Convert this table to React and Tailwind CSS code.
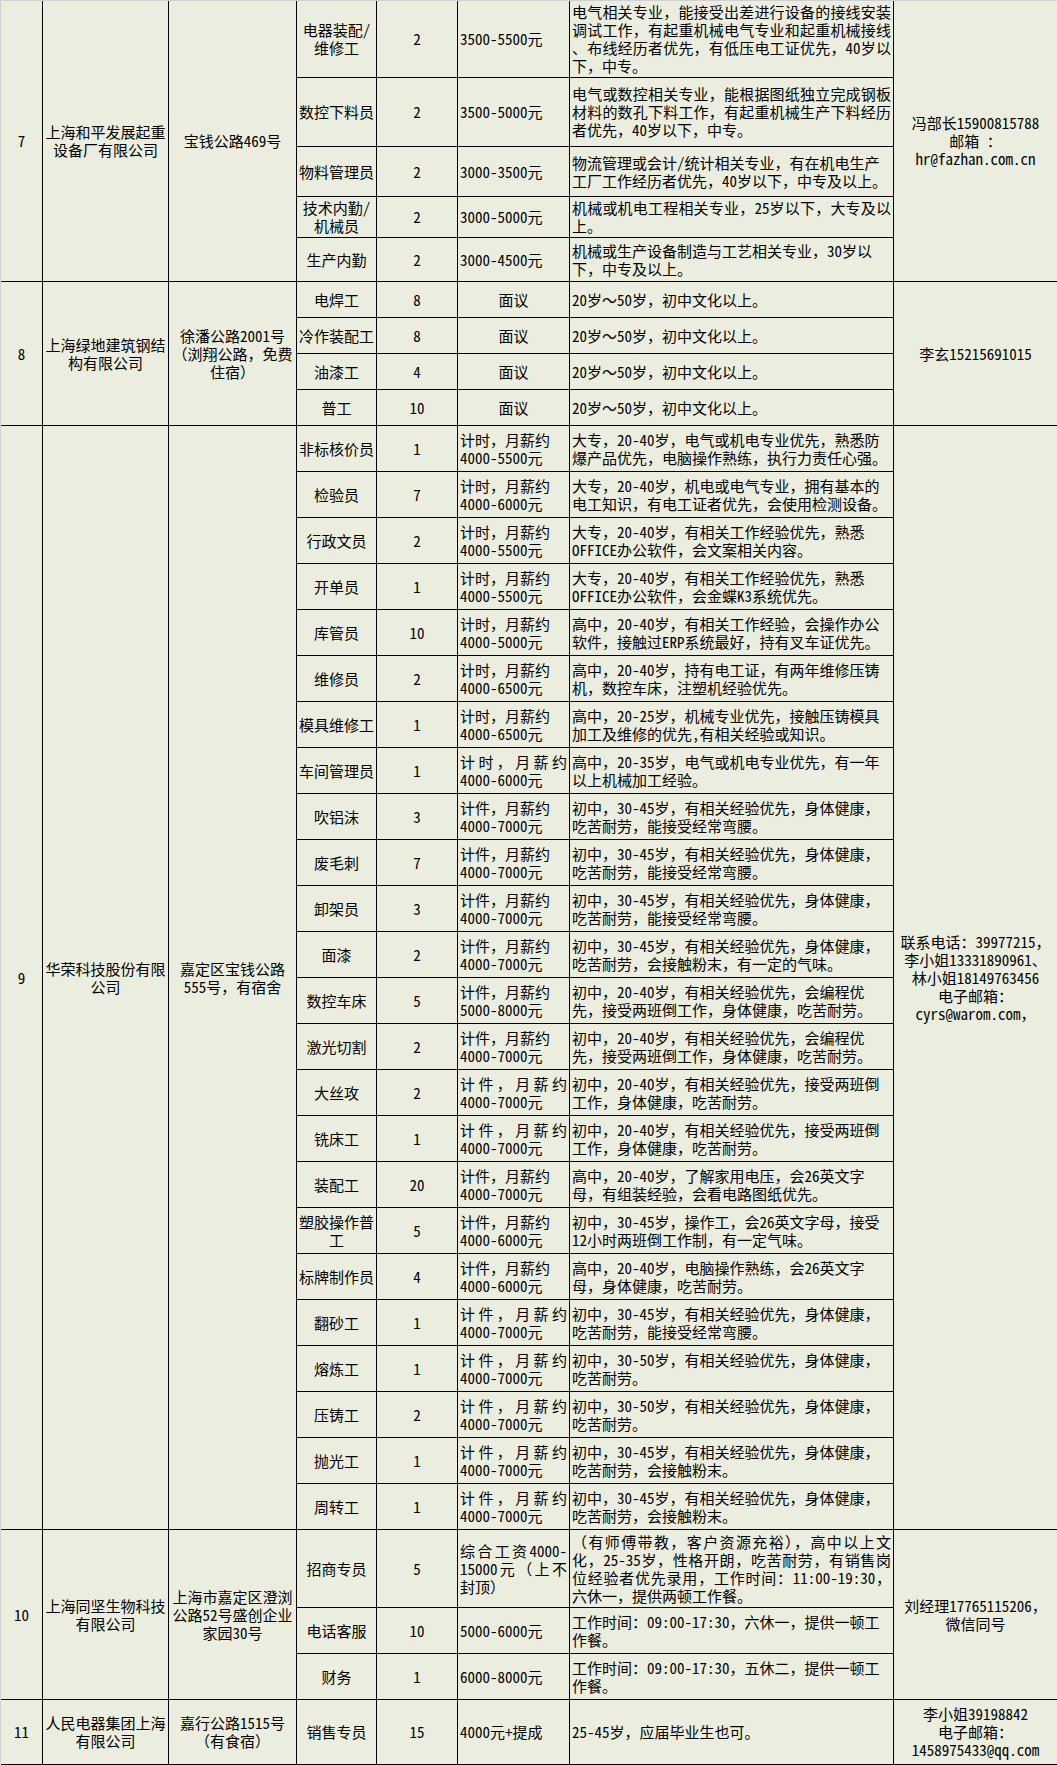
import React from 'react'

const FONT = "font-['Noto_Sans_Mono_CJK_SC','Noto_Sans_CJK_SC',sans-serif]"

const A = (pos, n, pay, req, opts = {}) => ({ pos, n, pay, req, ...opts })

const reqA = ['初中，30-45岁，有相关经验优先，身体健康，', '吃苦耐劳，能接受经常弯腰。']
const reqB = ['初中，20-40岁，有相关经验优先，会编程优', '先，接受两班倒工作，身体健康，吃苦耐劳。']
const reqC = ['初中，20-40岁，有相关经验优先，接受两班倒', '工作，身体健康，吃苦耐劳。']
const reqD = ['初中，30-50岁，有相关经验优先，身体健康，', '吃苦耐劳。']
const reqE = ['初中，30-45岁，有相关经验优先，身体健康，', '吃苦耐劳，会接触粉末。']

const hourly = (amt) => ['计时，月薪约', amt]
const piece = (amt) => ['计件，月薪约', amt]

const groups = [
  {
    no: '7',
    company: ['上海和平发展起重', '设备厂有限公司'],
    address: ['宝钱公路469号'],
    contact: ['冯部长15900815788', '邮箱 ：', 'hr@fazhan.com.cn'],
    jobs: [
      A(['电器装配/', '维修工'], '2', ['3500-5500元'], [
        '电气相关专业，能接受出差进行设备的接线安装',
        '调试工作，有起重机械电气专业和起重机械接线',
        '、布线经历者优先，有低压电工证优先，40岁以',
        '下，中专。',
      ], { h: 'h-[77px]', rj: 3 }),
      A(['数控下料员'], '2', ['3500-5000元'], [
        '电气或数控相关专业，能根据图纸独立完成钢板',
        '材料的数孔下料工作，有起重机械生产下料经历',
        '者优先，40岁以下，中专。',
      ], { h: 'h-[69px]', rj: 2 }),
      A(['物料管理员'], '2', ['3000-3500元'], [
        '物流管理或会计/统计相关专业，有在机电生产',
        '工厂工作经历者优先，40岁以下，中专及以上。',
      ], { h: 'h-[50px]' }),
      A(['技术内勤/', '机械员'], '2', ['3000-5000元'], [
        '机械或机电工程相关专业，25岁以下，大专及以',
        '上。',
      ], { h: 'h-[41px]', rj: 1 }),
      A(['生产内勤'], '2', ['3000-4500元'], [
        '机械或生产设备制造与工艺相关专业，30岁以',
        '下，中专及以上。',
      ], { h: 'h-[44px]' }),
    ],
  },
  {
    no: '8',
    company: ['上海绿地建筑钢结', '构有限公司'],
    address: ['徐潘公路2001号', '（浏翔公路，免费', '住宿）'],
    contact: ['李玄15215691015'],
    jobs: [
      A(['电焊工'], '8', ['面议'], ['20岁～50岁，初中文化以上。'], { h: 'h-[36px]', pc: true }),
      A(['冷作装配工'], '8', ['面议'], ['20岁～50岁，初中文化以上。'], { h: 'h-[36px]', pc: true }),
      A(['油漆工'], '4', ['面议'], ['20岁～50岁，初中文化以上。'], { h: 'h-[36px]', pc: true }),
      A(['普工'], '10', ['面议'], ['20岁～50岁，初中文化以上。'], { h: 'h-[36px]', pc: true }),
    ],
  },
  {
    no: '9',
    company: ['华荣科技股份有限', '公司'],
    address: ['嘉定区宝钱公路', '555号，有宿舍'],
    contact: ['联系电话：39977215，', '李小姐13331890961、', '林小姐18149763456', '电子邮箱：', 'cyrs@warom.com，'],
    jobs: [
      A(['非标核价员'], '1', hourly('4000-5500元'), ['大专，20-40岁，电气或机电专业优先，熟悉防', '爆产品优先，电脑操作熟练，执行力责任心强。']),
      A(['检验员'], '7', hourly('4000-6000元'), ['大专，20-40岁，机电或电气专业，拥有基本的', '电工知识，有电工证者优先，会使用检测设备。']),
      A(['行政文员'], '2', hourly('4000-5500元'), ['大专，20-40岁，有相关工作经验优先，熟悉', 'OFFICE办公软件，会文案相关内容。']),
      A(['开单员'], '1', hourly('4000-5500元'), ['大专，20-40岁，有相关工作经验优先，熟悉', 'OFFICE办公软件，会金蝶K3系统优先。']),
      A(['库管员'], '10', hourly('4000-5000元'), ['高中，20-40岁，有相关工作经验，会操作办公', '软件，接触过ERP系统最好，持有叉车证优先。']),
      A(['维修员'], '2', hourly('4000-6500元'), ['高中，20-40岁，持有电工证，有两年维修压铸', '机，数控车床，注塑机经验优先。']),
      A(['模具维修工'], '1', hourly('4000-6500元'), ['高中，20-25岁，机械专业优先，接触压铸模具', '加工及维修的优先,有相关经验或知识。']),
      A(['车间管理员'], '1', hourly('4000-6000元'), ['高中，20-35岁，电气或机电专业优先，有一年', '以上机械加工经验。'], { pj: 1 }),
      A(['吹铝沫'], '3', piece('4000-7000元'), reqA),
      A(['废毛刺'], '7', piece('4000-7000元'), reqA),
      A(['卸架员'], '3', piece('4000-7000元'), reqA),
      A(['面漆'], '2', piece('4000-7000元'), ['初中，30-45岁，有相关经验优先，身体健康，', '吃苦耐劳，会接触粉末，有一定的气味。']),
      A(['数控车床'], '5', piece('5000-8000元'), reqB),
      A(['激光切割'], '2', piece('4000-7000元'), reqB),
      A(['大丝攻'], '2', piece('4000-7000元'), reqC, { pj: 1 }),
      A(['铣床工'], '1', piece('4000-7000元'), reqC, { pj: 1 }),
      A(['装配工'], '20', piece('4000-7000元'), ['高中，20-40岁，了解家用电压，会26英文字', '母，有组装经验，会看电路图纸优先。']),
      A(['塑胶操作普', '工'], '5', piece('4000-6000元'), ['初中，30-45岁，操作工，会26英文字母，接受', '12小时两班倒工作制，有一定气味。']),
      A(['标牌制作员'], '4', piece('4000-6000元'), ['高中，20-40岁，电脑操作熟练，会26英文字', '母，身体健康，吃苦耐劳。']),
      A(['翻砂工'], '1', piece('4000-7000元'), reqA, { pj: 1 }),
      A(['熔炼工'], '1', piece('4000-7000元'), reqD, { pj: 1 }),
      A(['压铸工'], '2', piece('4000-7000元'), reqD, { pj: 1 }),
      A(['抛光工'], '1', piece('4000-7000元'), reqE, { pj: 1 }),
      A(['周转工'], '1', piece('4000-7000元'), reqE, { pj: 1 }),
    ].map((j) => ({ h: 'h-[46px]', ...j })),
  },
  {
    no: '10',
    company: ['上海同坚生物科技', '有限公司'],
    address: ['上海市嘉定区澄浏', '公路52号盛创企业', '家园30号'],
    contact: ['刘经理17765115206，', '微信同号'],
    jobs: [
      A(['招商专员'], '5', ['综合工资4000-', '15000元（上不', '封顶）'], [
        '（有师傅带教，客户资源充裕），高中以上文',
        '化，25-35岁，性格开朗，吃苦耐劳，有销售岗',
        '位经验者优先录用，工作时间：11:00-19:30，',
        '六休一，提供两顿工作餐。',
      ], { h: 'h-[78px]', pj: 2, rj: 3 }),
      A(['电话客服'], '10', ['5000-6000元'], ['工作时间：09:00-17:30，六休一，提供一顿工', '作餐。'], { h: 'h-[46px]' }),
      A(['财务'], '1', ['6000-8000元'], ['工作时间：09:00-17:30，五休二，提供一顿工', '作餐。'], { h: 'h-[46px]' }),
    ],
  },
  {
    no: '11',
    company: ['人民电器集团上海', '有限公司'],
    address: ['嘉行公路1515号', '（有食宿）'],
    contact: ['李小姐39198842', '电子邮箱：', '1458975433@qq.com'],
    jobs: [
      A(['销售专员'], '15', ['4000元+提成'], ['25-45岁，应届毕业生也可。'], { h: 'h-[65px]' }),
    ],
  },
]

const Lines = ({ lines, j = 0 }) =>
  lines.map((t, i) => (
    <div key={i} className={i < j ? 'whitespace-nowrap [text-align-last:justify]' : 'whitespace-nowrap'}>
      {t}
    </div>
  ))

const Center = ({ className, children }) => (
  <div className={`flex items-center justify-center text-center border-r border-b border-black ${className}`}>
    <div>{children}</div>
  </div>
)

const Left = ({ className, children }) => (
  <div className={`flex items-center px-[2px] border-r border-b border-black ${className}`}>
    <div className="w-full text-left">{children}</div>
  </div>
)

export default function App() {
  return (
    <div className={`w-[1057px] h-[1765px] overflow-hidden bg-[#ebeedf] border-t border-l border-[#d0d0d0] text-black text-[15px] leading-[18px] ${FONT}`}>
      {groups.map((g) => (
        <div key={g.no} className="flex">
          <Center className="w-[42px] shrink-0">{g.no}</Center>
          <Center className="w-[126px] shrink-0">
            <Lines lines={g.company} />
          </Center>
          <Center className="w-[128px] shrink-0">
            <Lines lines={g.address} />
          </Center>
          <div className="flex flex-col w-[597px] shrink-0">
            {g.jobs.map((job, i) => (
              <div key={i} className={`flex ${job.h}`}>
                <Center className="w-[80px] shrink-0">
                  <Lines lines={job.pos} />
                </Center>
                <Center className="w-[81px] shrink-0">{job.n}</Center>
                {job.pc ? (
                  <Center className="w-[112px] shrink-0">
                    <Lines lines={job.pay} />
                  </Center>
                ) : (
                  <Left className="w-[112px] shrink-0">
                    <Lines lines={job.pay} j={job.pj || 0} />
                  </Left>
                )}
                <Left className="w-[324px] shrink-0">
                  <Lines lines={job.req} j={job.rj || 0} />
                </Left>
              </div>
            ))}
          </div>
          <div className="flex-1 flex items-center justify-center text-center border-b border-black">
            <div>
              <Lines lines={g.contact} />
            </div>
          </div>
        </div>
      ))}
    </div>
  )
}
